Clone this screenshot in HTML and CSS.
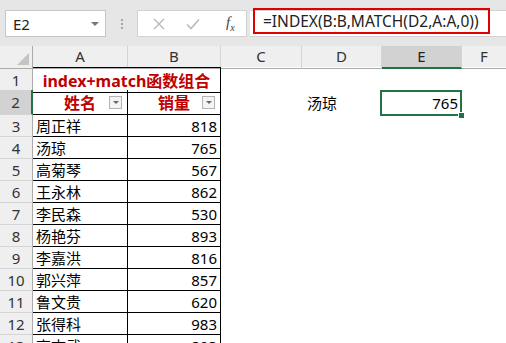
FILE: index.html
```html
<!DOCTYPE html>
<html>
<head>
    <meta charset="utf-8">
    <title>index+match</title>
    <link rel="stylesheet" href="styles.css">
</head>
<body>
    <div class="toolbar">
        <div class="namebox">
            <span>E2</span>
            <span class="caret"></span>
        </div>
        <div class="dots"><i></i><i></i><i></i></div>
        <div class="buttons">
            <svg class="btn" width="14" height="14" viewBox="0 0 14 14"><path d="M2 2 L12 12 M12 2 L2 12" stroke="#b9b9b9" stroke-width="1.4" fill="none"/></svg>
            <svg class="btn" width="16" height="14" viewBox="0 0 16 14"><path d="M2 7.5 L6 11.5 L14 2.5" stroke="#b9b9b9" stroke-width="1.6" fill="none"/></svg>
            <span class="fx">f<sub>x</sub></span>
        </div>
        <div class="formula">
            <div class="formula-text">=INDEX(B:B,MATCH(D2,A:A,0))</div>
        </div>
    </div>

    <div class="sheet">
        <div class="row head">
            <div class="corner"><span class="tri"></span></div>
            <div class="ch">A</div>
            <div class="ch">B</div>
            <div class="ch">C</div>
            <div class="ch">D</div>
            <div class="ch sel">E</div>
            <div class="ch last">F</div>
        </div>
        <div class="row r1">
            <div class="rh">1</div>
            <div class="c bd title">index+match函数组合</div>
            <div class="c"></div><div class="c"></div><div class="c"></div><div class="c"></div>
        </div>
        <div class="row r2">
            <div class="rh sel">2</div>
            <div class="c bd th">姓名<span class="filter"></span></div>
            <div class="c bd th">销量<span class="filter"></span></div>
            <div class="c"></div>
            <div class="c lookup">汤琼</div>
            <div class="c num active">765</div>
            <div class="c"></div>
        </div>
        <div class="row"><div class="rh">3</div><div class="c bd">周正祥</div><div class="c bd num">818</div></div>
        <div class="row"><div class="rh">4</div><div class="c bd">汤琼</div><div class="c bd num">765</div></div>
        <div class="row"><div class="rh">5</div><div class="c bd">高菊琴</div><div class="c bd num">567</div></div>
        <div class="row"><div class="rh">6</div><div class="c bd">王永林</div><div class="c bd num">862</div></div>
        <div class="row"><div class="rh">7</div><div class="c bd">李民森</div><div class="c bd num">530</div></div>
        <div class="row"><div class="rh">8</div><div class="c bd">杨艳芬</div><div class="c bd num">893</div></div>
        <div class="row"><div class="rh">9</div><div class="c bd">李嘉洪</div><div class="c bd num">816</div></div>
        <div class="row"><div class="rh">10</div><div class="c bd">郭兴萍</div><div class="c bd num">857</div></div>
        <div class="row"><div class="rh">11</div><div class="c bd">鲁文贵</div><div class="c bd num">620</div></div>
        <div class="row"><div class="rh">12</div><div class="c bd">张得科</div><div class="c bd num">983</div></div>
        <div class="row"><div class="rh">13</div><div class="c bd">高志武</div><div class="c bd num">893</div></div>
    </div>
</body>
</html>
```

FILE: styles.css
```css
html, body {
    margin: 0;
    padding: 0;
    background: #fff;
    overflow: hidden;
}

body {
    width: 506px;
    height: 343px;
    font-family: "Noto Sans", "Noto Sans CJK SC", sans-serif;
    font-size: 15px;
    color: #000;
}

/* formula bar */
.toolbar {
    height: 46px;
    background: #e6e6e6;
    display: flex;
    align-items: flex-start;
    padding-top: 10px;
    box-sizing: border-box;
}

.namebox {
    margin-left: 5px;
    width: 101px;
    height: 27px;
    box-sizing: border-box;
    background: #fff;
    border: 1px solid #c6c6c6;
    display: flex;
    align-items: center;
    justify-content: space-between;
    padding: 0 6px 0 7px;
    color: #222;
    font-size: 15px;
}

.caret {
    width: 0;
    height: 0;
    border-left: 4px solid transparent;
    border-right: 4px solid transparent;
    border-top: 4px solid #777;
}

.dots {
    width: 31px;
    height: 27px;
    display: flex;
    flex-direction: column;
    align-items: center;
    justify-content: center;
    gap: 2px;
}

.dots i {
    width: 2px;
    height: 2px;
    background: #a8a8a8;
}

.buttons {
    width: 110px;
    height: 27px;
    box-sizing: border-box;
    background: #fff;
    border: 1px solid #d2d2d2;
    display: flex;
    align-items: center;
    padding-left: 14px;
    gap: 19px;
}

.fx {
    font-family: "Liberation Serif", serif;
    font-style: italic;
    font-size: 15px;
    color: #444;
    margin-left: 6px;
}

.fx sub {
    font-size: 10px;
}

.formula {
    flex: 1;
    height: 27px;
    margin-left: 3px;
    background: #fff;
    border-top: 1px solid #d2d2d2;
    border-bottom: 1px solid #d2d2d2;
    box-sizing: border-box;
    position: relative;
}

.formula-text {
    position: absolute;
    left: 3px;
    top: -3px;
    width: 237px;
    height: 26px;
    box-sizing: border-box;
    border: 2px solid #e00000;
    padding-left: 8px;
    line-height: 22px;
    font-size: 15.5px;
    color: #222;
    white-space: nowrap;
}

/* sheet */
.row {
    display: grid;
    grid-template-columns: 33px 95px 93px 81px 80px 80px 44px;
    height: 22px;
}

.row.head {
    height: 21px;
    background: #efefef;
}

.row.r1 {
    height: 23px;
}

.row.r2 {
    height: 25px;
}

.corner {
    border-right: 1px solid #ababab;
    border-bottom: 1px solid #ababab;
    position: relative;
}

.tri {
    position: absolute;
    right: 3px;
    bottom: 3px;
    width: 0;
    height: 0;
    border-left: 12px solid transparent;
    border-bottom: 12px solid #c4c4c4;
}

.ch {
    border-right: 1px solid #d4d4d4;
    border-bottom: 1px solid #ababab;
    text-align: center;
    line-height: 21px;
    color: #333;
}

.ch.sel {
    background: #d2d2d2;
    border-bottom: 2px solid #217346;
    color: #222;
}

.ch.last {
    border-right: none;
}

.rh {
    background: #efefef;
    border-right: 1px solid #ababab;
    border-bottom: 1px solid #d4d4d4;
    display: flex;
    align-items: center;
    justify-content: center;
    color: #333;
}

.rh.sel {
    background: #d2d2d2;
    border-right: 2px solid #217346;
}

.c {
    display: flex;
    align-items: center;
    padding: 0 3px;
    white-space: nowrap;
    box-sizing: border-box;
}

.c.bd {
    border-right: 1px solid #000;
    border-bottom: 1px solid #000;
}

.num {
    justify-content: flex-end;
}

.title {
    grid-column: span 2;
    justify-content: center;
    color: #c00000;
    font-weight: bold;
    font-size: 16px;
    border-top: 1px solid #000;
}

.th {
    justify-content: center;
    color: #c00000;
    font-weight: bold;
    font-size: 16px;
    position: relative;
}

.filter {
    position: absolute;
    right: 5px;
    top: 6px;
    width: 13px;
    height: 13px;
    box-sizing: border-box;
    border: 1px solid #b4b4b4;
    background: #f4f4f4;
}

.filter::after {
    content: "";
    position: absolute;
    left: 3px;
    top: 4px;
    border-left: 3px solid transparent;
    border-right: 3px solid transparent;
    border-top: 3px solid #666;
}

.lookup {
    padding-left: 5px;
}

.active {
    position: relative;
    padding-right: 4px;
}

.active::before {
    content: "";
    position: absolute;
    left: -2px;
    top: 0;
    right: 0;
    bottom: -1px;
    border: 2px solid #217346;
}

.active::after {
    content: "";
    position: absolute;
    right: -3px;
    bottom: -4px;
    width: 5px;
    height: 5px;
    background: #217346;
    border: 1px solid #fff;
}
```
